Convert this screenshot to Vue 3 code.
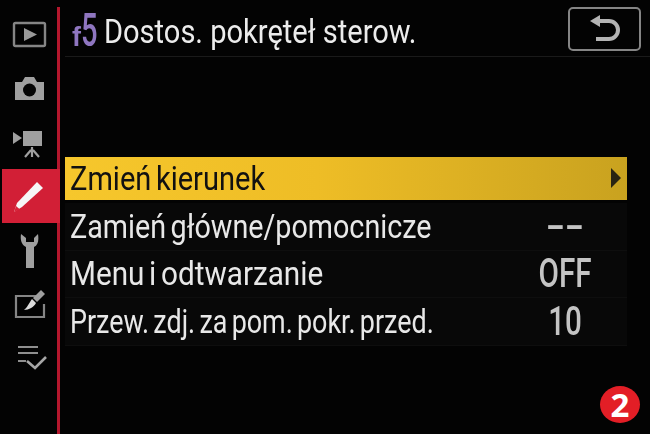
<script setup>
// fit = horizontal squeeze per row, the camera's font is narrower than Roboto
const rows = [
  { label: 'Zmień kierunek', value: '', active: true, fit: 0.88 },
  { label: 'Zamień główne/pomocnicze', value: '--', fit: 0.87 },
  { label: 'Menu i odtwarzanie', value: 'OFF', fit: 0.9 },
  { label: 'Przew. zdj. za pom. pokr. przed.', value: '10', fit: 0.815 },
]
</script>

<template>
  <div class="screen">
    <nav class="sidebar">
      <div class="tab">
        <svg viewBox="0 0 58 54" width="58" height="54">
          <rect x="14" y="16" width="31" height="23" rx="1.5" fill="none" stroke="#858585" stroke-width="2.4" />
          <path d="M24 21v13l13-6.500z" fill="#999" />
        </svg>
      </div>
      <div class="tab">
        <svg viewBox="0 0 58 54" width="58" height="54">
          <path d="M15 21h7l3-5h9l3 5h7v18H15z" fill="#a0a0a0" />
          <circle cx="29.500" cy="29" r="6.500" fill="#050505" />
        </svg>
      </div>
      <div class="tab">
        <svg viewBox="0 0 58 54" width="58" height="54">
          <path d="M13 17l9 6-9 6z" fill="#a0a0a0" />
          <rect x="23" y="16" width="19" height="15" fill="#a0a0a0" />
          <path d="M32 32v10M31 35l-6 7M33 35l6 7" stroke="#a0a0a0" stroke-width="2.2" fill="none" />
        </svg>
      </div>
      <div class="tab selected">
        <svg viewBox="0 0 58 54" width="58" height="54">
          <path d="M37 13l6 6-21 19-8 5 3-9z" fill="#f6f6f6" />
          <path d="M14 43l2-6 4 3.500z" fill="#d8233a" />
        </svg>
      </div>
      <div class="tab">
        <svg viewBox="0 0 58 54" width="58" height="54">
          <path d="M21 11c-1 7 1 11 5 13v21h8V24c4-2 5-6 4-13l-4 4v4h-8v-4z" fill="#a0a0a0" />
        </svg>
      </div>
      <div class="tab">
        <svg viewBox="0 0 58 54" width="58" height="54">
          <path d="M36 19H16v21h28V27" fill="none" stroke="#858585" stroke-width="2.2" />
          <path d="M41 13l4 4-8 8-4-4z" fill="#a0a0a0" />
          <path d="M32 22l4 4c-2 4-7 7-12 7 3-2 5-7 8-11z" fill="#dcdcdc" />
        </svg>
      </div>
      <div class="tab">
        <svg viewBox="0 0 58 54" width="58" height="54">
          <path d="M18 16h20M18 22h20M18 30h8" stroke="#8f8f8f" stroke-width="2.2" fill="none" />
          <path d="M27 30l8 7 11-11" stroke="#a6a6a6" stroke-width="2.6" fill="none" />
        </svg>
      </div>
    </nav>

    <main class="content">
      <header class="title-bar">
        <span class="code"><span class="code-f">f</span><span class="code-n">5</span></span>
        <h1 class="title">Dostos. pokręteł sterow.</h1>
        <div class="back">
          <svg viewBox="0 0 34 30" width="34" height="30">
            <path d="M2 7l10-6v12z" fill="#b4b4b4" />
            <path d="M10 7h11a9 9 0 0 1 0 18H8" fill="none" stroke="#b4b4b4" stroke-width="4" />
          </svg>
        </div>
      </header>

      <ul class="rows">
        <li v-for="row in rows" :key="row.label" class="row" :class="{ active: row.active }">
          <span class="label" :style="{ transform: `scaleX(${row.fit})` }">{{ row.label }}</span>
          <span v-if="row.value" class="value" :class="{ dash: row.value === '--' }">{{ row.value }}</span>
          <span v-if="row.active" class="arrow"></span>
        </li>
      </ul>
    </main>

    <div class="badge">2</div>
  </div>
</template>

<style>
html, body {
  margin: 0;
  background: #000;
}
</style>

<style scoped>
.screen {
  position: relative;
  width: 650px;
  height: 434px;
  display: flex;
  overflow: hidden;
  background: #030303;
  font-family: Roboto, "Liberation Sans", sans-serif;
}

.sidebar {
  box-sizing: border-box;
  width: 60px;
  margin-top: 7px;
  border-right: 3px solid #b4172d;
  display: flex;
  flex-direction: column;
  filter: blur(0.4px);
}

.tab {
  height: 54px;
  flex: none;
}

.tab svg {
  display: block;
}

.tab.selected {
  width: 58px;
  margin-left: 2px;
  background: #d21f36;
}

.tab.selected svg {
  margin-left: -2px;
}

.content {
  flex: 1;
  min-width: 0;
  padding-left: 5px;
  filter: blur(0.45px);
}

.title-bar {
  box-sizing: border-box;
  height: 57px;
  border-bottom: 1px solid #1a1a1a;
  display: flex;
  align-items: flex-start;
}

.code {
  width: 39px;
  flex: none;
  color: #8f76c0;
  display: flex;
  align-items: baseline;
  padding: 6px 0 0 7px;
  box-sizing: border-box;
}

.code-f {
  font: 700 27px "Liberation Sans", sans-serif;
  width: 16px;
}

.code-n {
  font-size: 47px;
  line-height: 47px;
  font-weight: 500;
  display: inline-block;
  transform: scaleX(0.62);
  transform-origin: left;
}

.title {
  margin: 13px 0 0;
  font-size: 33px;
  line-height: 38px;
  font-weight: 400;
  color: #ececec;
  white-space: nowrap;
  flex: 1;
  min-width: 0;
  transform: scaleX(0.88);
  transform-origin: left;
}

.back {
  box-sizing: border-box;
  width: 73px;
  height: 44px;
  margin: 7px 9px 0 0;
  border: 2px solid #858585;
  border-radius: 5px;
  display: flex;
  align-items: center;
  justify-content: center;
}

.rows {
  list-style: none;
  margin: 100px 23px 0 0;
  padding: 0;
}

.row {
  box-sizing: border-box;
  height: 47.5px;
  padding-left: 5px;
  display: flex;
  align-items: center;
  border-bottom: 1px solid #0e0e0e;
  background: #080808;
  color: #e8e8e8;
  position: relative;
}

.row.active {
  height: 43px;
  margin-bottom: 3px;
  border: 0;
  color: #111;
  background: linear-gradient(90deg, #f6c72c 0%, #eebd26 45%, #c9a21f 100%);
}

.label {
  font-size: 33px;
  word-spacing: -3px;
  white-space: nowrap;
  transform-origin: left;
}

.value {
  position: absolute;
  left: 450px;
  width: 100px;
  text-align: center;
  font-size: 40px;
  font-weight: 500;
  color: #c4c4c4;
  transform: scaleX(0.74);
  white-space: nowrap;
}

.value.dash {
  transform: scaleX(1.4);
}

.arrow {
  position: absolute;
  right: 6px;
  top: 11px;
  width: 0;
  height: 0;
  border-left: 10px solid #2a2412;
  border-top: 10px solid transparent;
  border-bottom: 10px solid transparent;
}

.badge {
  position: absolute;
  left: 600px;
  top: 386px;
  width: 40px;
  height: 37px;
  border-radius: 50%;
  background: #e31e26;
  color: #fff;
  font: 700 33px/37px "Open Sans", sans-serif;
  text-align: center;
}
</style>
